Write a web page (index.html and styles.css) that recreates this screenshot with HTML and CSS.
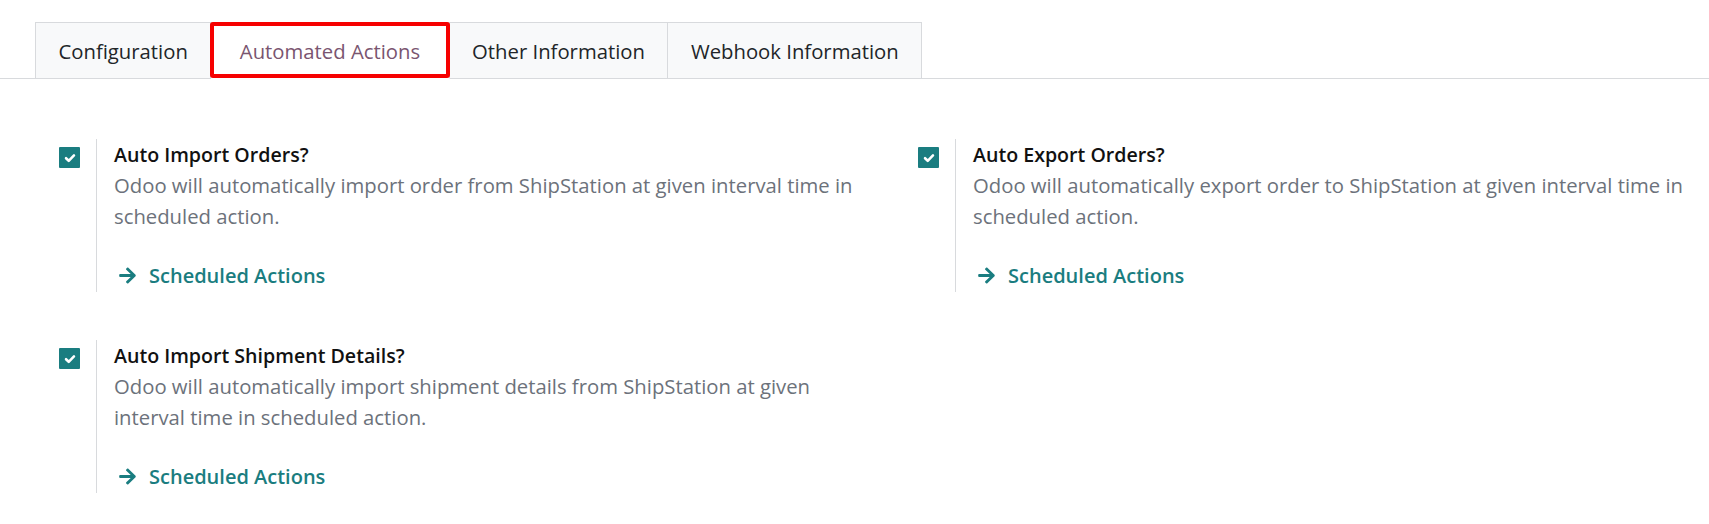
FILE: index.html
```html
<!DOCTYPE html>
<html>
  <head>
    <title>ShipStation Settings</title>
    <link rel="stylesheet" href="styles.css">
  </head>
  <body>
  <div class="notebook">
    <ul class="nav-tabs">
      <li class="tab">Configuration</li>
      <li class="tab active">Automated Actions</li>
      <li class="tab">Other Information</li>
      <li class="tab">Webhook Information</li>
    </ul>
  </div>

  <div class="settings">
    <div class="setting-box">
      <span class="checkbox"><svg viewBox="0 0 12 12"><path d="M2.6 6.2l2.3 2.2 4.5-4.6"/></svg></span>
      <div class="setting-right">
        <div class="setting-title">Auto Import Orders?</div>
        <div class="setting-help">Odoo will automatically import order from ShipStation at given interval time in scheduled action.</div>
        <a class="setting-link" href="#"><svg viewBox="0 0 448 512"><path d="M190.5 66.9l22.2-22.2c9.4-9.4 24.6-9.4 33.9 0L441 239c9.4 9.4 9.4 24.6 0 33.9L246.6 467.3c-9.4 9.4-24.6 9.4-33.9 0l-22.2-22.2c-9.5-9.5-9.3-25 .4-34.3L311.4 296H24c-13.3 0-24-10.7-24-24v-32c0-13.3 10.7-24 24-24h287.4L190.9 101.2c-9.8-9.3-10-24.8-.4-34.3z"/></svg>Scheduled Actions</a>
      </div>
    </div>
    <div class="setting-box">
      <span class="checkbox"><svg viewBox="0 0 12 12"><path d="M2.6 6.2l2.3 2.2 4.5-4.6"/></svg></span>
      <div class="setting-right">
        <div class="setting-title">Auto Export Orders?</div>
        <div class="setting-help">Odoo will automatically export order to ShipStation at given interval time in scheduled action.</div>
        <a class="setting-link" href="#"><svg viewBox="0 0 448 512"><path d="M190.5 66.9l22.2-22.2c9.4-9.4 24.6-9.4 33.9 0L441 239c9.4 9.4 9.4 24.6 0 33.9L246.6 467.3c-9.4 9.4-24.6 9.4-33.9 0l-22.2-22.2c-9.5-9.5-9.3-25 .4-34.3L311.4 296H24c-13.3 0-24-10.7-24-24v-32c0-13.3 10.7-24 24-24h287.4L190.9 101.2c-9.8-9.3-10-24.8-.4-34.3z"/></svg>Scheduled Actions</a>
      </div>
    </div>
    <div class="setting-box">
      <span class="checkbox"><svg viewBox="0 0 12 12"><path d="M2.6 6.2l2.3 2.2 4.5-4.6"/></svg></span>
      <div class="setting-right">
        <div class="setting-title">Auto Import Shipment Details?</div>
        <div class="setting-help">Odoo will automatically import shipment details from ShipStation at given interval time in scheduled action.</div>
        <a class="setting-link" href="#"><svg viewBox="0 0 448 512"><path d="M190.5 66.9l22.2-22.2c9.4-9.4 24.6-9.4 33.9 0L441 239c9.4 9.4 9.4 24.6 0 33.9L246.6 467.3c-9.4 9.4-24.6 9.4-33.9 0l-22.2-22.2c-9.5-9.5-9.3-25 .4-34.3L311.4 296H24c-13.3 0-24-10.7-24-24v-32c0-13.3 10.7-24 24-24h287.4L190.9 101.2c-9.8-9.3-10-24.8-.4-34.3z"/></svg>Scheduled Actions</a>
      </div>
    </div>
  </div>
  </body>
</html>
```

FILE: styles.css
```css
body {
  margin: 0;
  background: #fff;
  font-family: "Open Sans", "Noto Sans", sans-serif;
  color: #212529;
  overflow: hidden;
}

.notebook {
  padding-top: 22px;
  border-bottom: 1px solid #d8dadd;
}

.nav-tabs {
  display: flex;
  margin: 0 0 -1px 35px;
  padding: 0;
  list-style: none;
}

.tab {
  position: relative;
  height: 55px;
  padding: 0 22.5px;
  display: flex;
  align-items: center;
  font-size: 20.3px;
  background: #f8f9fa;
  border: 1px solid #d8dadd;
  border-left: none;
  border-bottom-color: #d8dadd;
}

.tab:first-child {
  border-left: 1px solid #d8dadd;
}

.tab.active {
  background: #fff;
  color: #7a5570;
  padding: 0 28.5px;
  border-bottom-color: #fff;
}

/* red highlight frame round the open tab */
.tab.active::after {
  content: "";
  position: absolute;
  left: -1px;
  top: -1px;
  right: -1px;
  bottom: 0;
  border: 4px solid #f60000;
  border-radius: 3px;
}

.settings {
  display: grid;
  grid-template-columns: 859px 859px;
  row-gap: 48px;
  padding: 60px 0 0 36px;
}

.setting-box {
  display: flex;
}

.checkbox {
  flex: none;
  width: 21px;
  height: 21px;
  margin: 8px 16px 0 23px;
  background: #1a7d80;
  border-radius: 1px;
  display: flex;
  align-items: center;
  justify-content: center;
}

.checkbox svg {
  width: 14px;
  height: 14px;
  fill: none;
  stroke: #fff;
  stroke-width: 2.2;
  stroke-linecap: round;
  stroke-linejoin: round;
}

.setting-right {
  border-left: 1px solid #d8dadd;
  padding: 0 20px 0 17px;
  height: 153px;
}

.setting-title {
  font-size: 19.6px;
  font-weight: 600;
  line-height: 30px;
  margin-top: 1px;
  color: #111;
}

.setting-help {
  font-size: 20.3px;
  line-height: 30.5px;
  color: #6c727b;
}

.setting-link {
  display: inline-flex;
  align-items: center;
  margin: 31px 0 0 5px;
  font-size: 20px;
  font-weight: 600;
  color: #1a7d80;
  text-decoration: none;
}

.setting-link svg {
  width: 17px;
  height: 19px;
  margin-right: 13px;
  fill: #1a7d80;
}
```
